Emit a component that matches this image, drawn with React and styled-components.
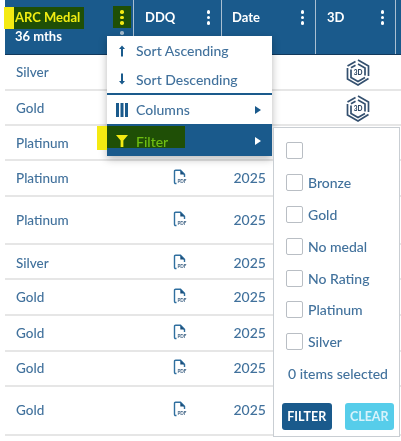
import React from "react";
import styled, { createGlobalStyle } from "styled-components";

const GlobalStyle = createGlobalStyle`
html, body {
  margin: 0;
  padding: 0;
  background: #fff;
}
`

const Page = styled.div`
position: relative;
width: 401px;
height: 441px;
overflow: hidden;
background: #fff;
font-family: Lato, "Open Sans", sans-serif;
color: #41719c;
filter: blur(0.35px);
`

const Table = styled.div`
display: flex;
flex-direction: column;
padding-left: 5px;
`

const HeadRow = styled.div`
display: grid;
grid-template-columns: 129px 88px 94px 80px 5px;
height: 55px;
border-bottom: 1px solid #12395c;
box-sizing: border-box;
`

const HeadCell = styled.div`
display: flex;
justify-content: space-between;
align-items: flex-start;
box-sizing: border-box;
background: #1a5a8c;
border-right: ${(p) => (p.$last ? "none" : "1px solid #a9bfd2")};
padding: 7px 11px 0 ${(p) => p.$left}px;
color: #fff;
font-size: 13px;
font-weight: 700;
`

const HeadText = styled.div`
display: flex;
flex-direction: column;
gap: 4px;
padding-top: 2px;
`

const HighlightTitle = styled.span`
display: block;
margin: -2px 0 -5px -1px;
padding: 2px 3px 4px 1px;
line-height: 16px;
width: 66px;
background: #1f4f06;
box-shadow: -10px 0 0 #f4ea12;
color: #f2ee12;
white-space: nowrap;
`

const SubTitle = styled.span`
line-height: 16px;
font-weight: 700;
white-space: nowrap;
`

const Kebab = styled.div`
position: relative;
display: flex;
flex-direction: column;
align-items: center;
box-sizing: border-box;
gap: 2px;
width: ${(p) => (p.$marked ? "18px" : "auto")};
height: ${(p) => (p.$marked ? "22px" : "auto")};
padding-top: ${(p) => (p.$marked ? "4.25px" : "3.25px")};
margin: ${(p) => (p.$marked ? "-1px -9px 0 0" : "0")};
background: ${(p) => (p.$marked ? "#1f4f06" : "transparent")};
i {
  display: block;
  width: 3.5px;
  height: 3.5px;
  border-radius: 50%;
  background: ${(p) => (p.$marked ? "#f4ea12" : "#fff")};
}
${(p) => p.$marked && `
&::after {
  content: "";
  position: absolute;
  left: 7.25px;
  top: 25px;
  width: 3.5px;
  height: 3.5px;
  border-radius: 50%;
  background: #a3b9cc;
}
`}
`

const Row = styled.div`
display: grid;
grid-template-columns: 129px 88px 94px 80px;
height: ${(p) => p.$h}px;
box-sizing: border-box;
border-bottom: 2px solid #e6e6e6;
font-size: 13.5px;
font-weight: 500;
`

const Medal = styled.div`
padding: ${(p) => p.$top}px 0 0 11px;
line-height: 18px;
`

const DocCell = styled.div`
padding: ${(p) => p.$top}px 0 0 39px;
`

const YearCell = styled.div`
padding: ${(p) => p.$top}px 0 0 11.5px;
line-height: 18px;
font-size: 14px;
`

const BadgeCell = styled.div`
grid-column: 4;
padding: 4px 0 0 30px;
`

const Menu = styled.div`
position: absolute;
left: 107px;
top: 36px;
width: 165px;
height: 120px;
background: #fff;
box-shadow: 0 3px 8px rgba(0, 0, 0, 0.28);
display: flex;
flex-direction: column;
`

const MenuItem = styled.div`
display: flex;
align-items: center;
box-sizing: border-box;
height: ${(p) => p.$h}px;
padding: ${(p) => (p.$active ? "0 11px 0 0" : "0 11px 0 9px")};
border-bottom: ${(p) => (p.$divider ? "2px solid #1a5a8c" : "none")};
background: ${(p) => (p.$active ? "#1a5a8c" : "transparent")};
font-size: 14px;
font-weight: 500;
`

const ItemIcon = styled.span`
display: flex;
justify-content: center;
width: 12px;
margin-right: 8px;
`

const ItemLabel = styled.span`
flex: 1;
white-space: nowrap;
`

const FilterMark = styled.div`
position: relative;
display: flex;
align-items: flex-start;
align-self: flex-start;
width: 78px;
height: 22px;
padding: 8px 0 0 9px;
margin-right: auto;
box-sizing: border-box;
background: #1f4f06;
color: #6fbf12;
font-size: 14px;
font-weight: 500;
line-height: 15px;
&::before {
  content: "";
  position: absolute;
  left: -10px;
  top: 0;
  width: 10px;
  height: 24px;
  background: #f4ea12;
}
`

const FilterPanel = styled.div`
position: absolute;
left: 273px;
top: 127px;
width: 127px;
height: 310px;
box-sizing: border-box;
background: #fff;
border: 1px solid #c9ced3;
padding: 7px 5px 0 8px;
display: flex;
flex-direction: column;
`

const CheckRow = styled.label`
display: flex;
align-items: center;
gap: 5px;
height: 31.8px;
padding-left: 4px;
font-size: 14px;
font-weight: 500;
white-space: nowrap;
`

const Box = styled.span`
display: block;
width: 15px;
height: 15px;
border: 1px solid #b9bec4;
border-radius: 2px;
background: #fff;
flex: none;
`

const Count = styled.div`
padding: 7px 0 0 6px;
font-size: 14px;
font-weight: 500;
line-height: 18px;
white-space: nowrap;
`

const Buttons = styled.div`
display: flex;
gap: 13px;
margin-top: 20px;
`

const ActionButton = styled.button`
width: 50px;
height: 27px;
border: none;
border-radius: 3px;
padding: 0;
font-family: inherit;
font-size: 12.5px;
font-weight: 700;
color: ${(p) => (p.$clear ? "#d8f3fb" : "#fff")};
background: ${(p) => (p.$clear ? "#56cdea" : "#1a5a8c")};
`

const rows = [
  { medal: "Silver", h: 36, top: 8, badge: true },
  { medal: "Gold", h: 35, top: 8, badge: true },
  { medal: "Platinum", h: 35, top: 8 },
  { medal: "Platinum", h: 36, top: 8, doc: true },
  { medal: "Platinum", h: 48, top: 14, doc: true },
  { medal: "Silver", h: 35, top: 9, doc: true },
  { medal: "Gold", h: 36, top: 8, doc: true },
  { medal: "Gold", h: 36, top: 8, doc: true },
  { medal: "Gold", h: 35, top: 7, doc: true },
  { medal: "Gold", h: 49, top: 14, doc: true },
]

const options = ["", "Bronze", "Gold", "No medal", "No Rating", "Platinum", "Silver"]

function PdfIcon() {
  return <svg width="16" height="16" viewBox="0 0 16 16" style={{ display: "block" }}>
    <path d="M3.5 14.5 H2.6 Q1.5 14.5 1.5 13.3 V2.4 Q1.5 1.2 2.6 1.2 H7.5 L11.5 5.4 V8" fill="none" stroke="#2f6f9f" strokeWidth="1.4" />
    <path d="M7.3 1.2 V5.4 H11.5 Z" fill="#1a4f7c" />
    <text x="4.4" y="14.4" fontSize="4.6" fontWeight="700" fontFamily="Lato" fill="#33597d">PDF</text>
  </svg>
}

function BadgeIcon() {
  return <svg width="24" height="27" viewBox="0 0 24 27" style={{ display: "block" }}>
    <g fill="none" stroke="#34506f" strokeWidth="1.7">
      <path d="M12 1 L22.5 7 V17" />
      <path d="M22.5 19.5 L12 26 L1.5 20 V9" />
      <path d="M1.5 7 L9.5 2.5" />
      <path d="M12 5 L19 9 V16.5" />
      <path d="M19 18.5 L12 22.5 L5 18.5 V10.5" />
      <path d="M5 8.8 L9.5 6.2" />
    </g>
    <text x="12" y="16" textAnchor="middle" fontSize="6.5" fontWeight="900" fontFamily="Lato" fill="#2c4663">3D</text>
  </svg>
}

function ArrowIcon({ down }) {
  return <svg width="8" height="12" viewBox="0 0 8 12" style={down ? { transform: "rotate(180deg)" } : undefined}>
    <path d="M4 0.5 L7 4 H5 V11.5 H3 V4 H1 Z" fill="#1a5a8c" />
  </svg>
}

function ColumnsIcon() {
  return <svg width="12" height="14" viewBox="0 0 12 14">
    <path d="M0 0 H3 V14 H0 Z M4.5 0 H7.5 V14 H4.5 Z M9 0 H12 V14 H9 Z" fill="#1a5a8c" />
  </svg>
}

function FunnelIcon() {
  return <svg width="13" height="14" viewBox="0 0 13 14">
    <path d="M0 0.5 H13 L8 6.5 V13.5 H5 V6.5 Z" fill="#f4ea12" />
  </svg>
}

function Caret({ color }) {
  return <svg width="6" height="8" viewBox="0 0 6 8">
    <path d="M0 0 L6 4 L0 8 Z" fill={color} />
  </svg>
}

export default function App() {
  return <Page>
    <GlobalStyle />
    <Table>
      <HeadRow>
        <HeadCell $left={10}>
          <HeadText>
            <HighlightTitle>ARC Medal</HighlightTitle>
            <SubTitle>36 mths</SubTitle>
          </HeadText>
          <Kebab $marked><i /><i /><i /></Kebab>
        </HeadCell>
        <HeadCell $left={11}>
          <HeadText>DDQ</HeadText>
          <Kebab><i /><i /><i /></Kebab>
        </HeadCell>
        <HeadCell $left={10}>
          <HeadText>Date</HeadText>
          <Kebab><i /><i /><i /></Kebab>
        </HeadCell>
        <HeadCell $left={11}>
          <HeadText>3D</HeadText>
          <Kebab><i /><i /><i /></Kebab>
        </HeadCell>
        <HeadCell $last $left={0} />
      </HeadRow>
      {rows.map((r, i) => <Row key={i} $h={r.h}>
        <Medal $top={r.top}>{r.medal}</Medal>
        {r.doc && <DocCell $top={r.top}><PdfIcon /></DocCell>}
        {r.doc && <YearCell $top={r.top}>2025</YearCell>}
        {r.badge && <BadgeCell><BadgeIcon /></BadgeCell>}
      </Row>)}
    </Table>

    <Menu>
      <MenuItem $h={29}>
        <ItemIcon><ArrowIcon /></ItemIcon>
        <ItemLabel>Sort Ascending</ItemLabel>
      </MenuItem>
      <MenuItem $h={30} $divider>
        <ItemIcon><ArrowIcon down /></ItemIcon>
        <ItemLabel>Sort Descending</ItemLabel>
      </MenuItem>
      <MenuItem $h={31} $divider>
        <ItemIcon><ColumnsIcon /></ItemIcon>
        <ItemLabel>Columns</ItemLabel>
        <Caret color="#1a5a8c" />
      </MenuItem>
      <MenuItem $h={30} $active>
        <FilterMark>
          <ItemIcon><FunnelIcon /></ItemIcon>
          Filter
        </FilterMark>
        <Caret color="#fff" />
      </MenuItem>
    </Menu>

    <FilterPanel>
      {options.map((o, i) => <CheckRow key={i}>
        <Box />
        {o}
      </CheckRow>)}
      <Count>0 items selected</Count>
      <Buttons>
        <ActionButton>FILTER</ActionButton>
        <ActionButton $clear>CLEAR</ActionButton>
      </Buttons>
    </FilterPanel>
  </Page>
}
